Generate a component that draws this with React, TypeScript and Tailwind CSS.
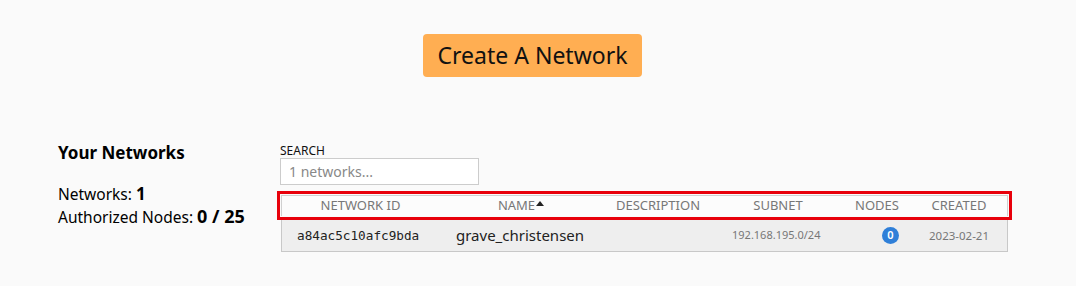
import React from "react";

const columns = [
  { label: "NETWORK ID", width: "w-[157px]" },
  { label: "NAME", width: "w-[164px]", sorted: true },
  { label: "DESCRIPTION", width: "w-[110px]" },
  { label: "SUBNET", width: "w-[130px]" },
  { label: "NODES", width: "w-[68px]" },
  { label: "CREATED", width: "flex-1" },
];

const App = () => {
  return (
    <div className="min-h-[286px] w-[1076px] bg-[#fafafa] font-['Noto_Sans',sans-serif] text-black">
      <div className="flex justify-center pt-[34px] pr-[11px]">
        <button className="h-[43px] w-[219px] rounded-[4px] bg-[#ffae52] text-[23px] leading-none text-[#111]">
          Create A Network
        </button>
      </div>

      <div className="mt-[66px] flex">
        <div className="w-[280px] pl-[58px] mt-[-3px]">
          <h2 className="text-[17px] font-bold leading-[26px]">Your Networks</h2>
          <div className="mt-[17px] text-[15.5px] leading-[22px]">
            Networks: <span className="text-[17px] font-bold">1</span>
          </div>
          <div className="text-[15.5px] leading-[22px]">
            Authorized Nodes: <span className="text-[18px] font-bold">0 / 25</span>
          </div>
        </div>

        <div className="w-[727px]">
          <div className="text-[12px] leading-[15px] text-[#111]">SEARCH</div>
          <input
            type="text"
            placeholder="1 networks..."
            className="h-[27px] w-[199px] border border-[#cccccc] bg-white px-[8px] text-[14px] placeholder:text-[#888]"
          />

          <div className="mt-[10px] ml-[1px] flex h-[21px] w-[727px] items-center border-x border-t border-[#d0d0d0] bg-[#fcfcfc] text-[13px] text-[#777] outline-[3px] outline-offset-[1px] outline-[#e8000b] outline-solid">
            {columns.map((c) => (
              <div key={c.label} className={`${c.width} flex items-center justify-center`}>
                {c.label}
                {c.sorted && (
                  <svg width="8" height="6" viewBox="0 0 8 6" className="ml-[1px] mb-[5px]">
                    <path d="M0 5 L4 0 L8 5 Z" fill="#222" />
                  </svg>
                )}
              </div>
            ))}
          </div>

          <div className="mt-[3px] ml-[1px] flex h-[33px] w-[727px] items-center border-x border-y border-[#c8c8c8] bg-[#eeeeee]">
            <div className="w-[158px] pl-[15px] font-['DejaVu_Sans_Mono',monospace] text-[12.7px] text-[#222]">
              a84ac5c10afc9bda
            </div>
            <div className="w-[164px] pl-[16px] text-[15px] text-[#222]">grave_christensen</div>
            <div className="w-[110px]"></div>
            <div className="w-[130px] pl-[18px] text-[11px] text-[#777]">192.168.195.0/24</div>
            <div className="flex w-[70px] justify-end pr-[15px]">
              <span className="flex h-[17px] w-[17px] items-center justify-center rounded-full bg-[#2f7fd8] text-[11px] font-semibold text-white">
                0
              </span>
            </div>
            <div className="flex-1 pl-[15px] text-[11.5px] text-[#777]">2023-02-21</div>
          </div>
        </div>
      </div>
    </div>
  );
};

export default App;
